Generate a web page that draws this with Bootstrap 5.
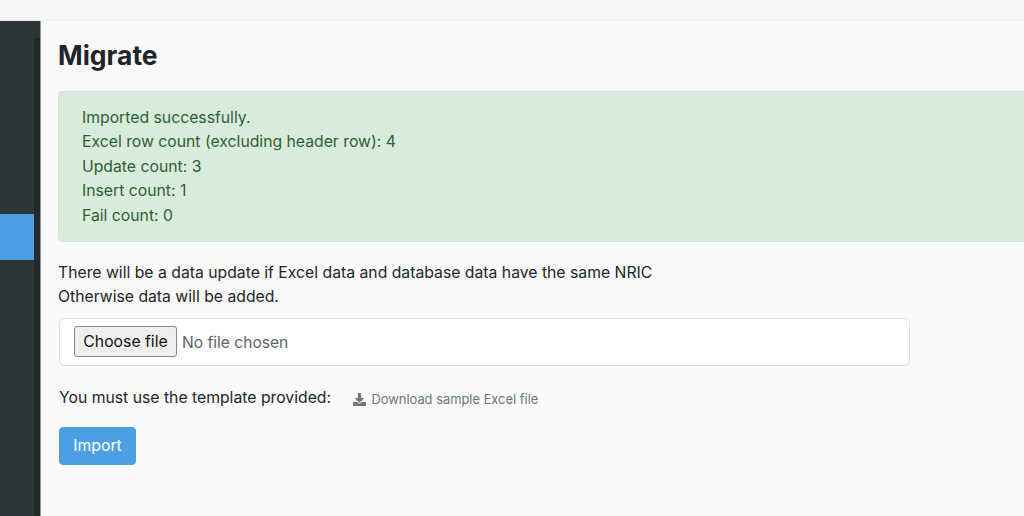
<!DOCTYPE html>
<html lang="en">
<head>
<meta charset="utf-8">
<title>Migrate</title>
<link rel="stylesheet" href="https://cdn.jsdelivr.net/npm/bootstrap@5.3.0/dist/css/bootstrap.min.css">
<style>
html,body{height:100%;overflow:hidden}
body{font-family:Inter,"Liberation Sans",sans-serif;font-size:15.75px;line-height:24.4px;background:#fafafa;color:#212529}
.top-strip{height:21px;background:#f6f6f6;border-bottom:1px solid #eeeeee}
.shell{height:495px}
.side-rail{width:41px;flex:none;background:#2d3539;border-right:1px solid #8f9496;padding-top:17px}
.side-inner{height:100%;width:34px;background:#2d3539;box-shadow:6px 0 0 #23292c;padding-top:176px}
.side-active{height:46px;background:#4c9fe3}
.main-pane{flex:1 1 auto;min-width:0;padding:0 0 0 17px}
.page-title{font-size:26.5px;font-weight:700;line-height:32px;margin:18px 0 20px;color:#212529}
.ok-box{background:#d9ebdb;border:1px solid #cfe4d2;border-right:0;color:#2c5f34;border-radius:5px 0 0 5px;padding:14px 23px;height:151px;margin-bottom:19px}
.note-text{margin-bottom:8px}
.file-box{width:851px;height:48px;margin-left:1px;background:#fff;border:1px solid #dcdfe2;border-radius:5px;padding:7px 14px;color:#5e6469}
.file-btn{font-family:inherit;font-size:15.75px;line-height:20px;height:31px;width:103px;padding:1px 0 0;background:#efefef;border:1px solid #8a8a8a;border-radius:3px;color:#111;margin-right:5px}
.file-label{position:relative;top:1px;font-size:15.6px}
.tmpl-row{margin:20px 0 16px 1px}
.tmpl-link{font-size:12.9px;color:#6c757d;text-decoration:none;margin-left:18px;position:relative;top:1px}
.tmpl-link svg{width:13px;height:13px;margin-right:5px;vertical-align:-2px}
.go-btn{background:#4c9fe3;border:1px solid #4c9fe3;color:#fff;font-size:15.75px;width:77px;height:38px;padding:0;margin-left:1px;border-radius:4px}
.go-btn:hover{background:#4c9fe3;color:#fff}
</style>
</head>
<body>
<div class="top-strip"></div>
<div class="shell d-flex">
  <div class="side-rail"><div class="side-inner"><div class="side-active"></div></div></div>
  <main class="main-pane">
    <h1 class="page-title">Migrate</h1>
    <div class="alert ok-box" role="alert">Imported successfully.<br>Excel row count (excluding header row): 4<br>Update count: 3<br>Insert count: 1<br>Fail count: 0</div>
    <p class="note-text">There will be a data update if Excel data and database data have the same NRIC<br>Otherwise data will be added.</p>
    <div class="file-box d-flex align-items-center"><button type="button" class="file-btn">Choose file</button><span class="file-label">No file chosen</span></div>
    <div class="tmpl-row">You must use the template provided:
      <a href="#" class="tmpl-link"><svg viewBox="0 0 512 512" fill="#6c757d"><path d="M216 0h80c13 0 24 11 24 24v168h88c18 0 27 21 14 34L270 378c-8 8-20 8-28 0L90 226c-13-13-4-34 14-34h88V24c0-13 11-24 24-24zm296 376v112c0 13-11 24-24 24H24c-13 0-24-11-24-24V376c0-13 11-24 24-24h147l49 49c20 20 52 20 72 0l49-49h147c13 0 24 11 24 24z"/></svg>Download sample Excel file</a>
    </div>
    <button type="button" class="btn go-btn">Import</button>
  </main>
</div>
<script src="https://cdn.jsdelivr.net/npm/bootstrap@5.3.0/dist/js/bootstrap.bundle.min.js"></script>
</body>
</html>
